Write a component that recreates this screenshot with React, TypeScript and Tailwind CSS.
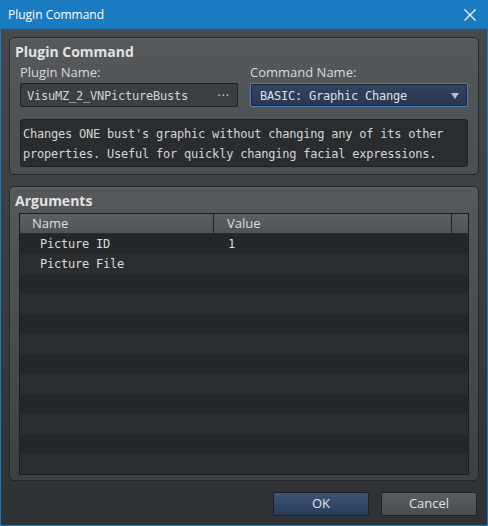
const sans = { fontFamily: '"Open Sans", "Noto Sans", sans-serif' };
const mono = { fontFamily: '"DejaVu Sans Mono", "Liberation Mono", monospace' };

const args = [
  { name: "Picture ID", value: "1" },
  { name: "Picture File", value: "" },
];

function GroupBox({ title, className, children }: { title: string; className?: string; children: React.ReactNode }) {
  return (
    <div
      className={`rounded-[5px] border border-[#232527] shadow-[inset_0_1px_0_rgba(255,255,255,0.07),inset_1px_0_0_rgba(255,255,255,0.04)] ${className ?? ""}`}
    >
      <div className="pl-[5px] pt-[5px] text-[14px] leading-[17px] font-bold text-[#e2e2e2]">{title}</div>
      {children}
    </div>
  );
}

export default function App() {
  const rows = Array.from({ length: 12 }, (_, i) => args[i] ?? { name: "", value: "" });

  return (
    <div className="w-[488px] h-[526px] bg-[#1b7bc0] px-[1px] pb-[1px] flex flex-col select-none" style={sans}>
      <div className="h-[29px] flex items-center justify-between pl-[7px] pr-[11px] text-white">
        <span className="text-[12px]">Plugin Command</span>
        <svg width="12" height="12" viewBox="0 0 12 12">
          <path d="M0.5 0.5 L11.5 11.5 M11.5 0.5 L0.5 11.5" stroke="#ffffff" strokeWidth="1.1" />
        </svg>
      </div>

      <div className="flex-1 flex flex-col px-[8px] pt-[8px] bg-gradient-to-b from-[#47494c] via-[#3a3d40] to-[#2f3235]">
        <GroupBox title="Plugin Command" className="h-[138px] bg-gradient-to-b from-[#56595c] to-[#4c4f52]">
          <div className="px-[10px] pt-[4px]">
            <div className="grid grid-cols-2 gap-x-[12px]">
              <div className="flex flex-col">
                <span className="text-[13px] leading-[16px] text-[#dadada]">Plugin Name:</span>
                <div className="mt-[3px] h-[24px] rounded-[2px] border border-[#1f2123] bg-[#3c3f42] flex items-center justify-between pl-[6px] pr-[7px] pt-[1px] text-[#d4d4d4]">
                  <span className="text-[12px] tracking-[-0.22px]" style={mono}>VisuMZ_2_VNPictureBusts</span>
                  <span className="text-[12px] leading-none tracking-[1px]">···</span>
                </div>
              </div>
              <div className="flex flex-col">
                <span className="text-[13px] leading-[16px] text-[#dadada]">Command Name:</span>
                <div className="mt-[3px] h-[24px] rounded-[2px] border border-[#4f80b8] bg-gradient-to-b from-[#33445e] to-[#283752] shadow-[inset_0_0_0_1px_#1c2433] flex items-center justify-between pl-[9px] pr-[8px] pt-[1px] text-[#e0e0e0]">
                  <span className="text-[12px] tracking-[-0.22px]" style={mono}>BASIC: Graphic Change</span>
                  <svg width="8" height="6" viewBox="0 0 8 6">
                    <path d="M0 0 H8 L4 6 Z" fill="#b9bec6" />
                  </svg>
                </div>
              </div>
            </div>
            <div
              className="mt-[12px] h-[48px] rounded-[3px] border border-[#1e2022] bg-[#2a2d30] px-[2px] pt-[5px] text-[12px] leading-[19.5px] tracking-[-0.22px] text-[#d6d6d6]"
              style={mono}
            >
              Changes ONE bust's graphic without changing any of its other
              <br />
              properties. Useful for quickly changing facial expressions.
            </div>
          </div>
        </GroupBox>

        <GroupBox title="Arguments" className="mt-[11px] h-[295px] bg-gradient-to-b from-[#56595c] to-[#3d4043] flex flex-col">
          <div className="mx-[9px] mt-[4px] border border-[#1b1d1f] flex flex-col">
            <div className="h-[20px] flex bg-gradient-to-b from-[#5c5f62] to-[#505356] text-[13px] text-[#dedede] border-b border-[#2a2c2e]">
              <div className="w-[194px] border-r border-[#1f2123] pl-[12px] leading-[19px]">Name</div>
              <div className="w-[238px] border-r border-[#1f2123] pl-[13px] leading-[19px]">Value</div>
              <div className="flex-1" />
            </div>
            {rows.map((r, i) => (
              <div
                key={i}
                className={`h-[20px] flex items-center text-[12px] tracking-[-0.22px] text-[#dcdcdc] ${i % 2 === 0 ? "bg-[#24272a]" : "bg-[#2b2e31]"}`}
                style={mono}
              >
                <div className="w-[195px] pl-[20px]">{r.name}</div>
                <div className="pl-[13px]">{r.value}</div>
              </div>
            ))}
          </div>
        </GroupBox>

        <div className="flex justify-end gap-[12px] mt-[11px] pr-[2px]">
          <button className="w-[96px] h-[24px] rounded-[2px] border border-[#1d1f22] bg-gradient-to-b from-[#3c5577] to-[#2a3c57] text-[13px] text-[#e6e6e6]">
            OK
          </button>
          <button className="w-[96px] h-[24px] rounded-[2px] border border-[#1f2123] bg-gradient-to-b from-[#5a5d60] to-[#4b4e51] text-[13px] text-[#e2e2e2]">
            Cancel
          </button>
        </div>
      </div>
    </div>
  );
}
